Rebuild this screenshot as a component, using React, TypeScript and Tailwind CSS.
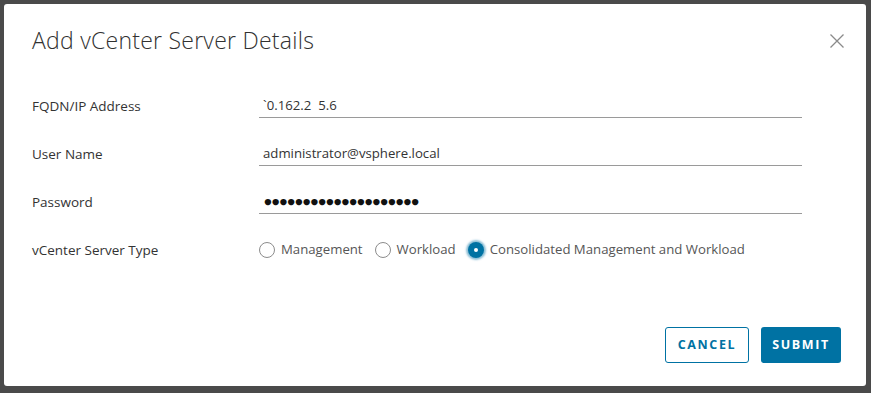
import React from "react";

const font = { fontFamily: "'Open Sans', Lato, sans-serif" };

function Field({ label, children }: { label: string; children: React.ReactNode }) {
  return (
    <div className="flex items-center h-[48px]">
      <div className="w-[227px] text-[13.5px] text-[#333]">{label}</div>
      {children}
    </div>
  );
}

function Radio({ checked, label }: { checked?: boolean; label: string }) {
  return (
    <div className="flex items-center mr-[12px]">
      {checked ? (
        <span className="w-[16px] h-[16px] rounded-full bg-[#0072a3] flex items-center justify-center shadow-[0_0_2px_2px_rgba(0,114,163,0.45)]">
          <span className="w-[4px] h-[4px] rounded-full bg-white" />
        </span>
      ) : (
        <span className="w-[16px] h-[16px] rounded-full border border-[#8c8c8c] bg-white" />
      )}
      <span className="ml-[6px] text-[13.2px] text-[#565656]">{label}</span>
    </div>
  );
}

export default function App() {
  return (
    <div className="w-[871px] h-[393px] bg-[#4a4a4a] pt-[4px] pl-[4px]" style={font}>
      <div className="w-[862px] h-[382px] bg-white rounded-[3px] flex flex-col">
        <div className="flex items-start justify-between pl-[28px] pr-[21px] pt-[22px]">
          <h1 className="text-[23px] font-light text-[#313131] leading-[28px] tracking-[0.25px]">Add vCenter Server Details</h1>
          <svg width="16" height="16" viewBox="0 0 16 16" className="mt-[7px]">
            <path d="M1.5 1.5 L14.5 14.5 M14.5 1.5 L1.5 14.5" stroke="#8a8a8a" strokeWidth="1.3" />
          </svg>
        </div>
        <div className="pl-[28px] pt-[28px]">
          <Field label="FQDN/IP Address">
            <div className="w-[543px] h-[23px] border-b border-[#9a9a9a] pl-[4px] text-[13.2px] leading-[21px] text-[#333]">
              `0.162.2&nbsp;&nbsp;5.6
            </div>
          </Field>
          <Field label="User Name">
            <div className="w-[543px] h-[23px] border-b border-[#9a9a9a] pl-[4px] text-[13.2px] leading-[21px] text-[#333]">
              administrator@vsphere.local
            </div>
          </Field>
          <Field label="Password">
            <div className="w-[543px] h-[23px] border-b border-[#9a9a9a] pl-[5px] text-[13px] leading-[21px] text-[#111] tracking-[-0.05px]">
              ●●●●●●●●●●●●●●●●●●●●
            </div>
          </Field>
          <Field label="vCenter Server Type">
            <div className="flex items-center">
              <Radio label="Management" />
              <Radio label="Workload" />
              <Radio checked label="Consolidated Management and Workload" />
            </div>
          </Field>
        </div>
        <div className="flex-1" />
        <div className="flex justify-end gap-[12px] pr-[25px] pb-[23px]">
          <button className="w-[84px] h-[36px] border border-[#0072a3] rounded-[3px] text-[#0072a3] text-[12.5px] font-bold tracking-[1.6px]">
            CANCEL
          </button>
          <button className="w-[80px] h-[36px] bg-[#0072a3] rounded-[3px] text-white text-[12.5px] font-bold tracking-[1.6px]">
            SUBMIT
          </button>
        </div>
      </div>
    </div>
  );
}
